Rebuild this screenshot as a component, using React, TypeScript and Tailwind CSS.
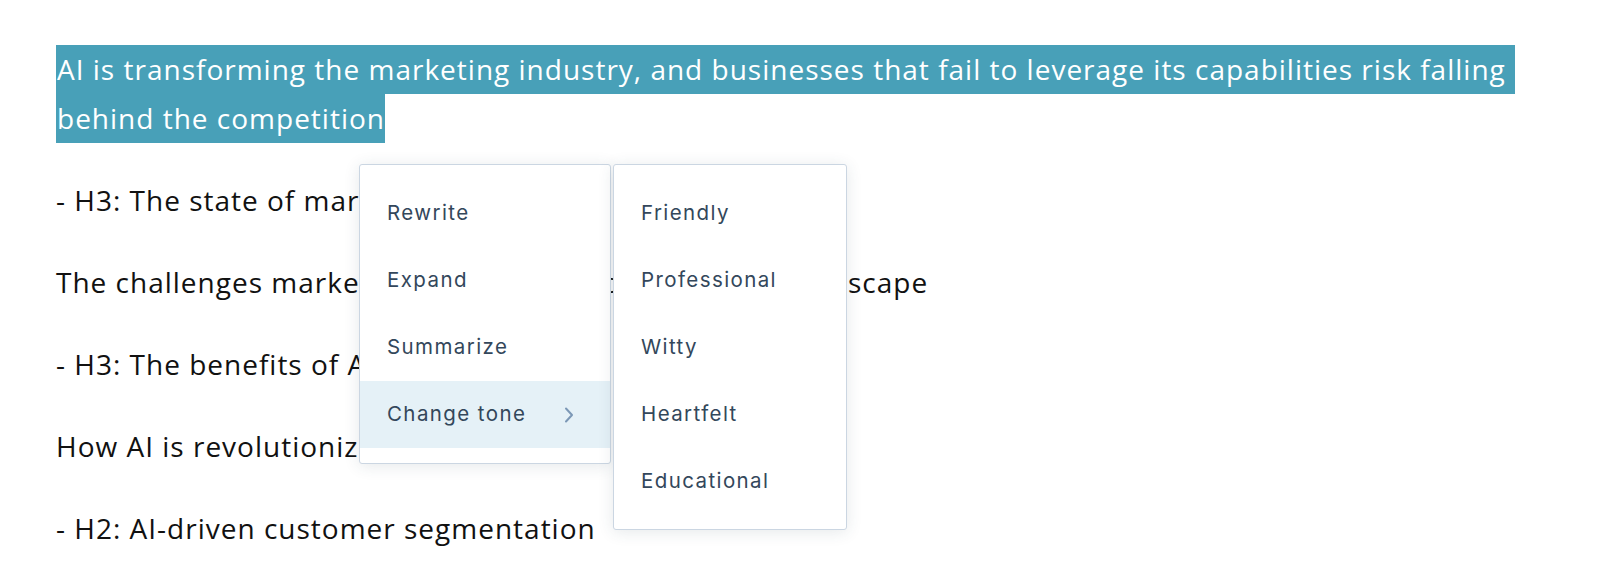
import React from 'react';

const paragraphs = [
  '- H3: The state of marketing today',
  'The challenges marketers face in a rapidly changing landscape',
  '- H3: The benefits of AI in marketing',
  'How AI is revolutionizing the marketing space',
  '- H2: AI-driven customer segmentation',
];

const mainItems = ['Rewrite', 'Expand', 'Summarize'];
const toneItems = ['Friendly', 'Professional', 'Witty', 'Heartfelt', 'Educational'];

const Chevron = () => (
  <svg width="10" height="18" viewBox="0 0 10 18" fill="none">
    <path d="M2 2.5L8 9L2 15.5" stroke="#7c98b6" strokeWidth="2" strokeLinecap="round" strokeLinejoin="round" />
  </svg>
);

export default function App() {
  return (
    <div className="relative w-[1600px] h-[564px] bg-white overflow-hidden">
      {/* editor text */}
      <div className="pt-[45px] pl-[56px] flex flex-col gap-[33px] text-[28px] text-[#111] font-['Open_Sans',sans-serif] tracking-[1px] leading-[49px] whitespace-nowrap">
        <div>
          <div className="w-fit bg-[#48a0b8] text-white pl-[1px] pr-[9px]">
            AI is transforming the marketing industry, and businesses that fail to leverage its capabilities risk falling
          </div>
          <div className="w-fit bg-[#48a0b8] text-white pl-[1px]">behind the competition</div>
        </div>
        {paragraphs.map((p) => (
          <div key={p}>{p}</div>
        ))}
      </div>

      {/* ai menu */}
      <div className="absolute left-[359px] top-[164px] w-[252px] py-[15px] bg-white border border-[#cbd6e2] rounded-[3px] shadow-[0_2px_16px_rgba(45,62,80,0.12)] font-['Inter',sans-serif] text-[20.5px] tracking-[1.4px] text-[#33475b]">
        {mainItems.map((m) => (
          <div key={m} className="h-[67px] flex items-center pl-[27px]">
            {m}
          </div>
        ))}
        <div className="h-[67px] flex items-center pl-[27px] pr-[36px] bg-[#e5f1f7] justify-between">
          <span>Change tone</span>
          <Chevron />
        </div>
      </div>

      <div className="absolute left-[613px] top-[164px] w-[234px] h-[366px] py-[15px] bg-white border border-[#cbd6e2] rounded-[3px] shadow-[0_2px_16px_rgba(45,62,80,0.12)] font-['Inter',sans-serif] text-[20.5px] tracking-[1.4px] text-[#33475b]">
        {toneItems.map((t) => (
          <div key={t} className="h-[67px] flex items-center pl-[27px]">
            {t}
          </div>
        ))}
      </div>
    </div>
  );
}
